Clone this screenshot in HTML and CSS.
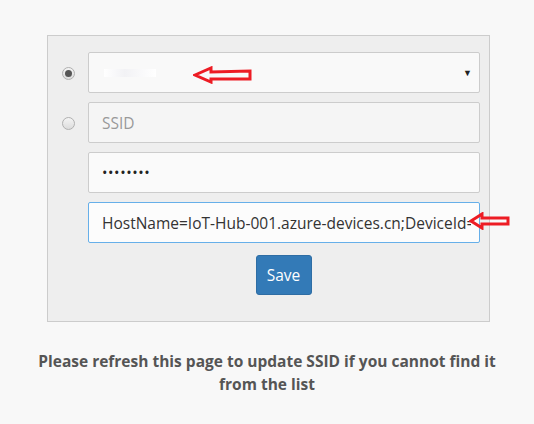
FILE: index.html
```html
<!DOCTYPE html>
<html>
<head>
<meta charset="utf-8">
<link rel="stylesheet" href="styles.css">
</head>
<body>
<div class="page">
  <div class="panel">
    <div class="row">
      <span class="radio checked"></span>
      <div class="field select">
        <span class="blur"></span>
        <span class="caret">&#9660;</span>
        <svg class="arrow arrow1" width="60" height="18" viewBox="0 0 60 18"><path d="M2 9 L18 2 L18 6 L57 5 L57 13 L18 13 L18 16 Z" fill="none" stroke="#ed1c24" stroke-width="3" stroke-linejoin="miter"/></svg>
      </div>
    </div>
    <div class="row">
      <span class="radio"></span>
      <div class="field placeholder">SSID</div>
    </div>
    <div class="row">
      <span class="spacer"></span>
      <div class="field password">&#8226;&#8226;&#8226;&#8226;&#8226;&#8226;&#8226;&#8226;</div>
    </div>
    <div class="row">
      <span class="spacer"></span>
      <div class="field focus">
        <span class="value">HostName=IoT-Hub-001.azure-devices.cn;DeviceId=</span>
        <svg class="arrow arrow2" width="42" height="18" viewBox="0 0 42 18"><path d="M2 9 L13 2 L13 6 L39 6 L39 12 L13 12 L13 16 Z" fill="none" stroke="#ed1c24" stroke-width="3"/></svg>
      </div>
    </div>
    <div class="actions">
      <button class="btn">Save</button>
    </div>
  </div>
  <p class="note">Please refresh this page to update SSID if you cannot find it from the list</p>
</div>
</body>
</html>
```
FILE: styles.css
```css
html, body {
  margin: 0;
  padding: 0;
  background: #f8f8f8;
}
body {
  font-family: "Open Sans", "Noto Sans", sans-serif;
}
.page {
  width: 534px;
  padding-top: 35px;
}
.panel {
  margin-left: 47px;
  width: 441px;
  background: #eeeeee;
  border: 1px solid #cccccc;
  padding: 16px 0 26px 0;
  display: flex;
  flex-direction: column;
  gap: 9px;
}
.row {
  display: flex;
  align-items: center;
}
.radio, .spacer {
  width: 40px;
  flex: none;
  position: relative;
  height: 12px;
}
.radio::before {
  content: "";
  position: absolute;
  left: 14px;
  top: 0;
  width: 11px;
  height: 11px;
  border-radius: 50%;
  border: 1px solid #b0b0b0;
  background: linear-gradient(#f4f4f4, #dcdcdc);
}
.radio.checked::after {
  content: "";
  position: absolute;
  left: 17px;
  top: 3px;
  width: 7px;
  height: 7px;
  border-radius: 50%;
  background: #555;
}
.field {
  position: relative;
  width: 392px;
  border: 1px solid #cccccc;
  border-radius: 2px;
  background: #fafafa;
  display: flex;
  align-items: center;
  padding-left: 13px;
  box-sizing: border-box;
  height: 41px;
  font-size: 15.5px;
  color: #333;
}
.select {
  background: #f9f9f9;
}
.blur {
  display: inline-block;
  width: 52px;
  height: 8px;
  margin-left: 2px;
  background: linear-gradient(90deg, #ffffff, #f2f2f5 40%, #ffffff);
}
.caret {
  position: absolute;
  right: 7px;
  top: 13px;
  font-size: 9px;
  color: #222;
}
.placeholder {
  color: #999;
  background: #f5f5f5;
}
.password {
  font-size: 14.5px;
  letter-spacing: 0.6px;
  color: #222;
  background: #fafafa;
}
.focus {
  border-color: #66afe9;
  background: #fcfcfc;
  white-space: nowrap;
}
.value {
  display: block;
  width: 369px;
  overflow: hidden;
  color: #333;
}
.arrow {
  position: absolute;
}
.arrow1 {
  left: 104px;
  top: 13px;
}
.arrow2 {
  left: 380px;
  top: 9px;
}
.actions {
  display: flex;
  justify-content: center;
  padding-left: 30px;
  padding-top: 3px;
}
.btn {
  width: 56px;
  height: 40px;
  border: 1px solid #2e6da4;
  border-radius: 3px;
  background: #337ab7;
  color: #fff;
  font-family: "Open Sans", sans-serif;
  font-size: 15.5px;
  padding: 0;
}
.note {
  margin: 28px 0 0 0;
  text-align: center;
  font-weight: bold;
  color: #555;
  font-size: 15.5px;
  line-height: 23px;
  padding: 0 38px;
}
```
